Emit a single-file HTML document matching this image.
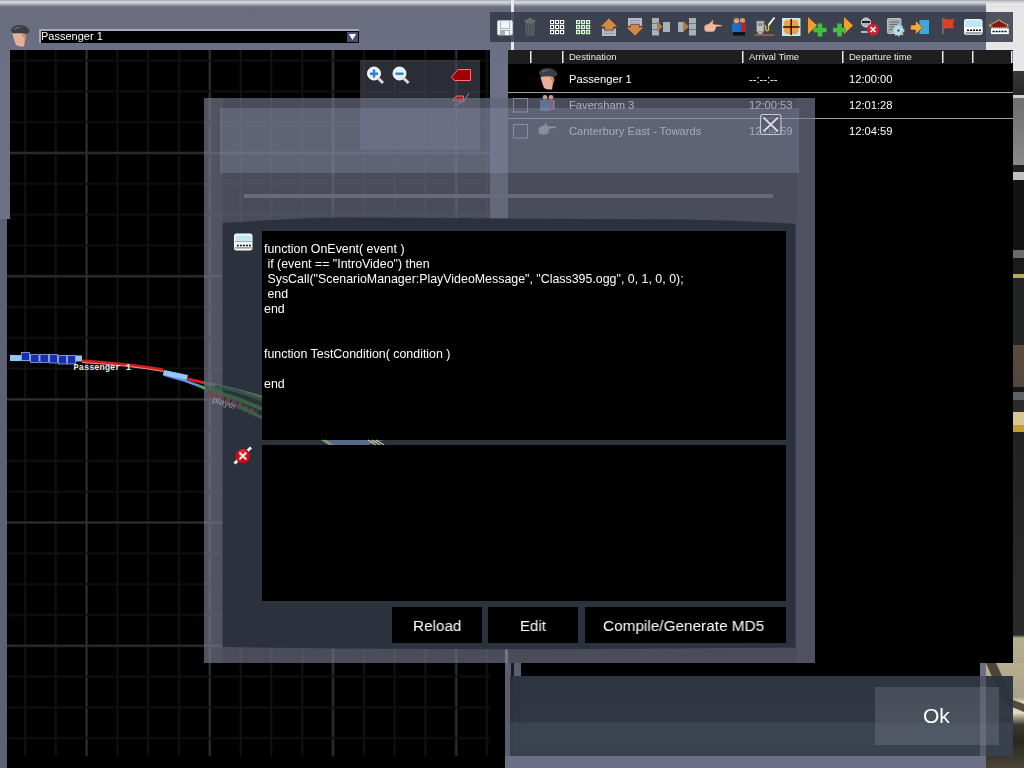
<!DOCTYPE html>
<html><head><meta charset="utf-8">
<style>
html,body{margin:0;padding:0;}
body{width:1024px;height:768px;overflow:hidden;position:relative;background:#6b6e81;font-family:"Liberation Sans",sans-serif;}
.a{position:absolute;}
.t{position:absolute;white-space:pre;color:#fff;line-height:1;will-change:transform;}
</style></head><body>
<!-- top strip -->
<div class="a" style="left:0;top:0;width:1024px;height:8px;background:linear-gradient(#8c8e98 0px,#d2d3d8 1px,#cfd0d6 3px,#7c7e8c 6px,#6a6c7e 8px);"></div>
<!-- main panel gradient -->
<div class="a" style="left:0;top:8px;width:986px;height:760px;background:linear-gradient(#6a6c7e,#6c7186 60px,#6b6f83);"></div>
<!-- right scene -->
<div class="a" style="left:986px;top:3px;width:38px;height:67px;background:#e6e6e8;"></div>
<div class="a" id="scene" style="left:1013px;top:60px;width:11px;height:708px;background:linear-gradient(#e6e6e8 0px,#e6e6e8 11px,#3a3a3a 11px,#262626 35px,#d0d0d0 35px,#d0d0d0 38px,#6e6e6e 38px,#8a8a8a 105px,#202020 105px,#202020 112px,#c0c0c0 112px,#c0c0c0 120px,#121212 120px,#121212 190px,#6a6a6a 190px,#6a6a6a 198px,#1a1a1a 198px,#1a1a1a 214px,#b8a860 214px,#b8a860 218px,#222428 218px,#222428 285px,#5a4a40 285px,#54463c 327px,#151515 327px,#151515 332px,#606060 332px,#606060 340px,#2a2a2a 340px,#2a2a2a 352px,#d8c890 352px,#d8c890 365px,#c0a030 365px,#c0a030 372px,#222 372px,#2a2a2a 575px,#b8ae90 578px,#b0a688 603px,#b8ae90 603px);"></div>
<div class="a" style="left:986px;top:663px;width:38px;height:105px;background:linear-gradient(#b8ae90,#aaa084 34px,#e4dcbc 40px,#e0d8b8 50px,#3a3630 62px,#2a2620 78px,#4a4438 105px);"></div>
<svg class="a" style="left:0;top:0;" width="1024" height="768"><path d="M986 663 L996 663 L1013 700 L1024 704 L1024 712 L1004 704 Z" fill="#3a3428" opacity="0.85"/></svg>
<div class="a" style="left:980px;top:663px;width:6px;height:105px;background:#6c7084;"></div>

<!-- left strip variation -->
<div class="a" style="left:0;top:219px;width:7px;height:549px;background:#5e6172;"></div>

<!-- map -->
<svg class="a" style="left:0;top:0;" width="1024" height="768">
<rect x="10" y="50" width="480" height="718" fill="#000"/>
<rect x="7" y="219" width="3" height="549" fill="#000"/>
<rect x="490" y="640" width="15" height="128" fill="#000"/>
<g id="grid">
<rect x="23.5" y="50" width="3" height="706" fill="#080808"/>
<rect x="54.3" y="50" width="3" height="706" fill="#080808"/>
<rect x="85.1" y="50" width="3" height="706" fill="#1c1c1c"/>
<rect x="115.9" y="50" width="3" height="706" fill="#080808"/>
<rect x="146.7" y="50" width="3" height="706" fill="#080808"/>
<rect x="177.5" y="50" width="3" height="706" fill="#080808"/>
<rect x="208.3" y="50" width="3" height="706" fill="#1c1c1c"/>
<rect x="239.1" y="50" width="3" height="706" fill="#080808"/>
<rect x="269.9" y="50" width="3" height="706" fill="#080808"/>
<rect x="300.7" y="50" width="3" height="706" fill="#080808"/>
<rect x="331.5" y="50" width="3" height="706" fill="#1c1c1c"/>
<rect x="362.3" y="50" width="3" height="706" fill="#080808"/>
<rect x="393.1" y="50" width="3" height="706" fill="#080808"/>
<rect x="423.9" y="50" width="3" height="706" fill="#080808"/>
<rect x="454.7" y="50" width="3" height="706" fill="#1c1c1c"/>
<rect x="485.5" y="50" width="3" height="706" fill="#080808"/>
<rect x="10" y="59.1" width="480" height="3" fill="#080808"/>
<rect x="10" y="89.9" width="480" height="3" fill="#080808"/>
<rect x="10" y="120.7" width="480" height="3" fill="#080808"/>
<rect x="10" y="151.5" width="480" height="3" fill="#1c1c1c"/>
<rect x="10" y="182.3" width="480" height="3" fill="#080808"/>
<rect x="10" y="213.1" width="480" height="3" fill="#080808"/>
<rect x="7" y="243.9" width="483" height="3" fill="#080808"/>
<rect x="7" y="274.7" width="483" height="3" fill="#1c1c1c"/>
<rect x="7" y="305.5" width="483" height="3" fill="#080808"/>
<rect x="7" y="336.3" width="483" height="3" fill="#080808"/>
<rect x="7" y="367.1" width="483" height="3" fill="#080808"/>
<rect x="7" y="397.9" width="483" height="3" fill="#1c1c1c"/>
<rect x="7" y="428.7" width="483" height="3" fill="#080808"/>
<rect x="7" y="459.5" width="483" height="3" fill="#080808"/>
<rect x="7" y="490.3" width="483" height="3" fill="#080808"/>
<rect x="7" y="521.1" width="483" height="3" fill="#1c1c1c"/>
<rect x="7" y="551.9" width="483" height="3" fill="#080808"/>
<rect x="7" y="582.7" width="483" height="3" fill="#080808"/>
<rect x="7" y="613.5" width="483" height="3" fill="#080808"/>
<rect x="7" y="644.3" width="483" height="3" fill="#1c1c1c"/>
<rect x="7" y="675.1" width="483" height="3" fill="#080808"/>
<rect x="7" y="705.9" width="483" height="3" fill="#080808"/>
<rect x="7" y="736.7" width="483" height="3" fill="#080808"/>
<rect x="24.5" y="50" width="1" height="706" fill="#171717"/>
<rect x="55.3" y="50" width="1" height="706" fill="#171717"/>
<rect x="86.1" y="50" width="1" height="706" fill="#363636"/>
<rect x="116.9" y="50" width="1" height="706" fill="#171717"/>
<rect x="147.7" y="50" width="1" height="706" fill="#171717"/>
<rect x="178.5" y="50" width="1" height="706" fill="#171717"/>
<rect x="209.3" y="50" width="1" height="706" fill="#363636"/>
<rect x="240.1" y="50" width="1" height="706" fill="#171717"/>
<rect x="270.9" y="50" width="1" height="706" fill="#171717"/>
<rect x="301.7" y="50" width="1" height="706" fill="#171717"/>
<rect x="332.5" y="50" width="1" height="706" fill="#363636"/>
<rect x="363.3" y="50" width="1" height="706" fill="#171717"/>
<rect x="394.1" y="50" width="1" height="706" fill="#171717"/>
<rect x="424.9" y="50" width="1" height="706" fill="#171717"/>
<rect x="455.7" y="50" width="1" height="706" fill="#363636"/>
<rect x="486.5" y="50" width="1" height="706" fill="#171717"/>
<rect x="10" y="60.1" width="480" height="1" fill="#121212"/>
<rect x="10" y="90.9" width="480" height="1" fill="#121212"/>
<rect x="10" y="121.7" width="480" height="1" fill="#121212"/>
<rect x="10" y="152.5" width="480" height="1" fill="#363636"/>
<rect x="10" y="183.3" width="480" height="1" fill="#121212"/>
<rect x="10" y="214.1" width="480" height="1" fill="#121212"/>
<rect x="7" y="244.9" width="483" height="1" fill="#121212"/>
<rect x="7" y="275.7" width="483" height="1" fill="#363636"/>
<rect x="7" y="306.5" width="483" height="1" fill="#121212"/>
<rect x="7" y="337.3" width="483" height="1" fill="#121212"/>
<rect x="7" y="368.1" width="483" height="1" fill="#121212"/>
<rect x="7" y="398.9" width="483" height="1" fill="#363636"/>
<rect x="7" y="429.7" width="483" height="1" fill="#121212"/>
<rect x="7" y="460.5" width="483" height="1" fill="#121212"/>
<rect x="7" y="491.3" width="483" height="1" fill="#121212"/>
<rect x="7" y="522.1" width="483" height="1" fill="#363636"/>
<rect x="7" y="552.9" width="483" height="1" fill="#121212"/>
<rect x="7" y="583.7" width="483" height="1" fill="#121212"/>
<rect x="7" y="614.5" width="483" height="1" fill="#121212"/>
<rect x="7" y="645.3" width="483" height="1" fill="#363636"/>
<rect x="7" y="676.1" width="483" height="1" fill="#121212"/>
<rect x="7" y="706.9" width="483" height="1" fill="#121212"/>
<rect x="7" y="737.7" width="483" height="1" fill="#121212"/>
</g>
<!-- track -->
<path d="M10 358 L82 358.5" stroke="#90c8f0" stroke-width="6"/>
<g fill="#1a2ea8" stroke="#8aa8f0" stroke-width="0.8">
<rect x="21.5" y="352.5" width="8" height="8"/>
<rect x="30.5" y="354.5" width="8.5" height="8"/>
<rect x="40" y="354.5" width="8.5" height="8"/>
<rect x="49.5" y="354.5" width="8" height="8.5"/>
<rect x="58.5" y="355.5" width="8" height="8.5"/>
<rect x="67.5" y="355.5" width="8" height="8.5"/>
</g>
<path d="M82 361 Q130 364 163.5 370" stroke="#d81c1c" stroke-width="3" fill="none"/>
<path d="M82 362.5 Q130 365.5 163.5 371.5" stroke="#f09090" stroke-width="1" fill="none"/>
<path d="M163.5 374.5 Q185 380 205 388" stroke="#6a90f0" stroke-width="2.5" fill="none"/>
<path d="M163.5 372.5 L187.5 377.5" stroke="#90c8f8" stroke-width="5" fill="none"/>
<path d="M187.5 379 L205 383" stroke="#d02020" stroke-width="3" fill="none"/>
<path d="M198 385.5 L205 389" stroke="#40b040" stroke-width="2" fill="none"/>
<text x="73.5" y="370" font-family="Liberation Mono" font-size="8.7" font-weight="bold" fill="#e8e8e8">Passenger 1</text>
</svg>

<!-- passenger head icon (top-left) -->
<svg class="a" style="left:0;top:0;" width="60" height="60"><g transform="translate(11 25)">
<path d="M1.5 8.5 Q2.5 14 5 20 Q8 22 13 21.5 L14.5 12 Q15.5 9 13 8 Z" fill="#e6ae9c"/>
<path d="M11.5 8.5 Q15 9 15.5 12 L14 16 Q13 12 11.5 11 Z" fill="#c89050"/>
<path d="M0 4.5 Q1 0.5 8 0 Q17 0.5 18.5 6 Q18 9 14 8.8 Q8 7.8 3 8.2 Q0 7.5 0 4.5 Z" fill="#3c3e44"/>
<path d="M2 3.5 Q6 1.2 12 2 Q8 2.8 4 4.5 Z" fill="#60646a"/>
</g></svg>

<!-- dropdown -->
<div class="a" style="left:39px;top:29px;width:320px;height:2px;background:#a8aab4;"></div>
<div class="a" style="left:39px;top:29px;width:2px;height:14px;background:#a8aab4;"></div>
<div class="a" style="left:41px;top:31px;width:318px;height:12px;background:#000;"></div>
<div class="a" style="left:347px;top:32px;width:11px;height:10px;background:#4c4c7c;"></div>
<svg class="a" style="left:348px;top:33px;" width="9" height="8"><path d="M1 1 L8 1 L4.5 7 Z" fill="#fff"/></svg>
<div class="t" style="left:41px;top:31px;font-size:11px;">Passenger 1</div>

<!-- zoom panel -->
<div class="a" style="left:360px;top:60px;width:120px;height:90px;background:rgba(72,78,92,0.58);"></div>
<svg class="a" style="left:364px;top:64px;" width="110" height="45">
<circle cx="10" cy="9.5" r="6.5" fill="#e8f0f8" stroke="#fff" stroke-width="1"/>
<rect x="6" y="8.5" width="8" height="2.5" fill="#3080d0"/><rect x="8.75" y="5.5" width="2.5" height="8" fill="#3080d0"/>
<path d="M14 14 L19 19" stroke="#d8d8d8" stroke-width="3"/>
<circle cx="35.5" cy="9.5" r="6.5" fill="#e8f0f8" stroke="#fff" stroke-width="1"/>
<rect x="31.5" y="8.5" width="8" height="2.5" fill="#3080d0"/>
<path d="M39.5 14 L44.5 19" stroke="#d8d8d8" stroke-width="3"/>
<path d="M94 5.5 L106.5 5.5 L106.5 16.5 L90.5 16.5 L87.5 13 Z" fill="#a00000" stroke="#ff7070" stroke-width="1"/>
<path d="M93 32 L99.5 32 L99.5 37 L89.5 37 L89.5 34.5 Z" fill="#b01010" stroke="#ff8080" stroke-width="0.8"/>
<path d="M100 37 L105 29 M100 37 L90 42" stroke="#b0b0c0" stroke-width="0.8"/>
</svg>

<!-- vertical white bar -->
<div class="a" style="left:511px;top:0;width:3px;height:50px;background:#e8e8f0;"></div>

<!-- toolbar -->
<div class="a" id="toolbar" style="left:490px;top:12px;width:523px;height:30px;background:rgba(50,57,70,0.85);"></div>

<svg class="a" style="left:0;top:0;" width="1024" height="50">
<!-- save -->
<rect x="497.5" y="20.5" width="15" height="14.5" rx="1.5" fill="#eef4fa" stroke="#b8c4d0" stroke-width="1"/>
<rect x="500.5" y="20.5" width="9" height="8" fill="#f4f4f4" stroke="#a0a8b0" stroke-width="0.8"/>
<rect x="500" y="30" width="10" height="5" fill="#a8acb0"/>
<rect x="505" y="31" width="4" height="4" fill="#fff"/>
<!-- trash -->
<path d="M525 22 L535 22 L534 35.5 L526 35.5 Z" fill="#5c5e62"/>
<ellipse cx="530" cy="21" rx="5.5" ry="2" fill="#6a6c70"/>
<rect x="528.5" y="18" width="3" height="2" fill="#777"/>
<path d="M527.5 24 V34 M530 24 V34 M532.5 24 V34" stroke="#464850" stroke-width="0.8"/>
<!-- grid white -->
<g fill="#fff">
<rect x="550" y="20" width="4.2" height="4.2"/><rect x="555" y="20" width="4.2" height="4.2"/><rect x="560" y="20" width="4.2" height="4.2"/>
<rect x="550" y="25" width="4.2" height="4.2"/><rect x="555" y="25" width="4.2" height="4.2"/><rect x="560" y="25" width="4.2" height="4.2"/>
<rect x="550" y="30" width="4.2" height="4.2"/><rect x="555" y="30" width="4.2" height="4.2"/><rect x="560" y="30" width="4.2" height="4.2"/>
</g>
<g fill="#000">
<rect x="551.2" y="21.2" width="1.8" height="1.8"/><rect x="556.2" y="21.2" width="1.8" height="1.8"/><rect x="561.2" y="21.2" width="1.8" height="1.8"/>
<rect x="551.2" y="26.2" width="1.8" height="1.8"/><rect x="556.2" y="26.2" width="1.8" height="1.8"/><rect x="561.2" y="26.2" width="1.8" height="1.8"/>
<rect x="551.2" y="31.2" width="1.8" height="1.8"/><rect x="556.2" y="31.2" width="1.8" height="1.8"/><rect x="561.2" y="31.2" width="1.8" height="1.8"/>
</g>
<!-- grid green -->
<g fill="#e8fae8">
<rect x="576" y="20" width="4.2" height="4.2"/><rect x="581" y="20" width="4.2" height="4.2"/><rect x="586" y="20" width="4.2" height="4.2"/>
<rect x="576" y="25" width="4.2" height="4.2"/><rect x="581" y="25" width="4.2" height="4.2"/><rect x="586" y="25" width="4.2" height="4.2"/>
<rect x="576" y="30" width="4.2" height="4.2"/><rect x="581" y="30" width="4.2" height="4.2"/><rect x="586" y="30" width="4.2" height="4.2"/>
</g>
<g fill="#30903a">
<rect x="577.1" y="21.1" width="2" height="2"/><rect x="582.1" y="21.1" width="2" height="2"/><rect x="587.1" y="21.1" width="2" height="2"/>
<rect x="577.1" y="26.1" width="2" height="2"/><rect x="582.1" y="26.1" width="2" height="2"/><rect x="587.1" y="26.1" width="2" height="2"/>
<rect x="577.1" y="31.1" width="2" height="2"/><rect x="582.1" y="31.1" width="2" height="2"/><rect x="587.1" y="31.1" width="2" height="2"/>
</g>
<!-- arrow up -->
<rect x="602" y="28.5" width="14" height="7.5" fill="#b4bcc8"/>
<path d="M604 31 H614 M604 33.5 H614" stroke="#8a929c" stroke-width="0.8"/>
<path d="M609 18 L618 27 L613.5 27 L613.5 30 L604.5 30 L604.5 27 L600 27 Z" fill="#d08a48" stroke="#4a3020" stroke-width="0.6"/>
<!-- arrow down -->
<rect x="628" y="18" width="14" height="8" fill="#b4bcc8"/>
<path d="M630 20.5 H640 M630 23 H640" stroke="#8a929c" stroke-width="0.8"/>
<path d="M635 36 L644 27 L639.5 27 L639.5 24.5 L630.5 24.5 L630.5 27 L626 27 Z" fill="#d08a48" stroke="#4a3020" stroke-width="0.6"/>
<!-- split1 -->
<rect x="652" y="18" width="7" height="5.5" fill="#a8b0b8"/><rect x="652" y="24" width="7" height="5.5" fill="#a8b0b8"/><rect x="652" y="30" width="7" height="5.5" fill="#a8b0b8"/>
<rect x="663" y="22" width="7" height="10" fill="#a8b0b8"/>
<path d="M657 21 L662.5 26.5 L657 32 Z" fill="#b87840"/>
<!-- split2 -->
<rect x="678" y="22" width="5.5" height="10" fill="#a8b0b8"/>
<rect x="689" y="18" width="7" height="5.5" fill="#a8b0b8"/><rect x="689" y="24" width="7" height="5.5" fill="#a8b0b8"/><rect x="689" y="30" width="7" height="5.5" fill="#a8b0b8"/>
<path d="M683 21 L689 26.5 L683 32 Z" fill="#b87840"/>
<!-- hand -->
<path d="M704 28 Q704 24 708 24 L711 22 Q712 19 713.5 20 L713 24 L722 25 L722 26.5 L716 27 Q716 32 712 32 L707 32 Q704 32 704 28 Z" fill="#f0b8a0" stroke="#2a2a2a" stroke-width="0.4"/>
<!-- people -->
<circle cx="742.5" cy="20.5" r="2.6" fill="#d89a80"/>
<rect x="739.5" y="22.5" width="6.5" height="10" rx="1" fill="#c02020"/>
<rect x="740" y="32" width="5" height="3.5" fill="#101010"/>
<circle cx="736.5" cy="20.5" r="2.8" fill="#e0a888"/>
<path d="M736.5 18 Q734 18 734 20 Q736 19 739 20 Q739 18 736.5 18 Z" fill="#b08040"/>
<rect x="732" y="23" width="9" height="9.5" rx="1.5" fill="#2070c0"/>
<rect x="733" y="32" width="7" height="3.5" fill="#101010"/>
<!-- pump -->
<rect x="756.5" y="21" width="7.5" height="11" fill="#c0c0c0" stroke="#707070" stroke-width="0.8"/>
<rect x="758" y="23" width="4.5" height="3" fill="#8a8a8a"/>
<rect x="758" y="32" width="4.5" height="2.5" fill="#b0b0b0"/>
<rect x="754.5" y="34" width="20" height="2" fill="#8a6238"/>
<path d="M764.5 25 Q766 26 766 30 Q767 32 768.5 30 L768.5 26 L772 21" stroke="#e0d040" stroke-width="1.2" fill="none"/>
<path d="M768.5 25 L774.5 17.5" stroke="#f0f0f0" stroke-width="2"/>
<!-- cross arrows -->
<rect x="782" y="18" width="18.5" height="18" fill="#c8e8f0"/>
<path d="M786 20 L796.5 20 L798.5 22.5 L798.5 31.5 L796.5 34 L786 34 L783.8 31.5 L783.8 22.5 Z" fill="#f0a040"/>
<path d="M783 27 H799.5 M791.2 19 V35" stroke="#2a0c04" stroke-width="1.5"/>
<!-- play+ -->
<path d="M808 17 L817 25.5 L808 34 Z" fill="#f0a030"/>
<path d="M813.5 30 H826.5 M820 23.5 V36.5" stroke="#40c040" stroke-width="4.6"/>
<!-- plus arrow -->
<path d="M844 17 L853 25.5 L844 34 Z" fill="#f0a030"/>
<path d="M833 30 H846 M839.5 23.5 V36.5" stroke="#40c040" stroke-width="4.6"/>
<!-- person x -->
<circle cx="866" cy="22.5" r="4.5" fill="#b0b4b8" stroke="#e0e0e0" stroke-width="1"/>
<rect x="862" y="21" width="8" height="2" fill="#202020"/>
<path d="M861 32 H868" stroke="#e0e0e0" stroke-width="1.5"/>
<circle cx="873" cy="29.5" r="6" fill="#d02030"/>
<path d="M870.5 27 L875.5 32 M875.5 27 L870.5 32" stroke="#fff" stroke-width="1.6"/>
<!-- doc gear -->
<rect x="887.5" y="18.5" width="13.5" height="15" rx="1" fill="#a8acb0" stroke="#d0d0d0" stroke-width="0.8"/>
<path d="M889.5 22 H899 M889.5 24.5 H897 M889.5 27 H896 M889.5 29.5 H895" stroke="#606468" stroke-width="0.9"/>
<circle cx="898.5" cy="30.5" r="5" fill="#b8e0f0" stroke="#a0d0e8" stroke-width="2" stroke-dasharray="1.6 1.6"/>
<circle cx="898.5" cy="30.5" r="1.2" fill="#405060"/>
<path d="M901 33 L904 35 L902 31 Z" fill="#f0a040"/>
<!-- arrow box -->
<rect x="919.5" y="20" width="9.5" height="14" fill="#40a8d8"/>
<path d="M910.5 25 L915.5 25 L915.5 20.5 L922.5 27.5 L915.5 34.5 L915.5 30 L910.5 30 Z" fill="#f4a838" stroke="#3a2a10" stroke-width="0.5"/>
<!-- flag -->
<rect x="942" y="18" width="1.6" height="16" fill="#707070"/>
<path d="M943.5 18.5 L949 19.5 L954 19 L953 24.5 L954 28.5 L948 28 L943.5 29 Z" fill="#e04020"/>
<!-- table icon -->
<rect x="964.5" y="19.5" width="17.5" height="15" rx="1.5" fill="#d8eef4" stroke="#f0f4f8" stroke-width="1"/>
<rect x="965.5" y="20.5" width="15.5" height="6.5" fill="#bfe6f2"/>
<rect x="965" y="27" width="17.5" height="5" fill="#fff"/>
<path d="M967 30.2 H981" stroke="#000" stroke-width="1.6" stroke-dasharray="2 1"/>
<rect x="965.5" y="32" width="16" height="2.5" fill="#a0aaa8"/>
<!-- house -->
<path d="M989.5 25.5 L999 20 L1008.5 25.5 L1005 27.8 L993 27.8 Z" fill="#801a1a" stroke="#e8d060" stroke-width="1.1" stroke-dasharray="1.3 0.7"/>
<rect x="991" y="28.3" width="17.8" height="5.8" fill="#fff"/>
<path d="M992.5 31.5 H1007.5" stroke="#000" stroke-width="1.6" stroke-dasharray="2 1"/>
</svg>

<!-- table -->
<div class="a" style="left:508px;top:50px;width:505px;height:14px;background:#1e1e1e;"></div>
<div class="a" style="left:508px;top:64px;width:505px;height:599px;background:#000;"></div>
<div class="a" style="left:520px;top:663px;width:460px;height:13px;background:#000;"></div>
<div class="a" style="left:508px;top:92px;width:505px;height:1px;background:#a0a0a0;"></div>
<div class="a" style="left:508px;top:118px;width:505px;height:1px;background:#a0a0a0;"></div>
<svg class="a" style="left:0;top:0;" width="1024" height="150">
<g fill="#e8e8e8">
<rect x="530" y="51" width="1.5" height="12"/><rect x="562" y="51" width="1.5" height="12"/>
<rect x="742" y="51" width="1.5" height="12"/><rect x="842" y="51" width="1.5" height="12"/>
<rect x="942" y="51" width="1.5" height="12"/><rect x="972" y="51" width="1.5" height="12"/>
<rect x="1011" y="51" width="1.5" height="12"/>
</g>
<!-- row1 passenger icon -->
<g transform="translate(539 68)">
<path d="M1.5 8.5 Q2.5 14 5 20 Q8 22 13 21.5 L14.5 12 Q15.5 9 13 8 Z" fill="#e6ae9c"/>
<path d="M11.5 8.5 Q15 9 15.5 12 L14 16 Q13 12 11.5 11 Z" fill="#c89050"/>
<path d="M0 4.5 Q1 0.5 8 0 Q17 0.5 18.5 6 Q18 9 14 8.8 Q8 7.8 3 8.2 Q0 7.5 0 4.5 Z" fill="#3c3e44"/>
<path d="M2 3.5 Q6 1.2 12 2 Q8 2.8 4 4.5 Z" fill="#60646a"/>
</g>
<!-- row2 people -->
<circle cx="551" cy="97.5" r="2.4" fill="#c8a090"/><circle cx="545" cy="97.5" r="2.4" fill="#c8a090"/>
<rect x="548.5" y="100" width="5.5" height="10" fill="#8a4858"/>
<rect x="553.5" y="100" width="1" height="9" fill="#b8b8c8"/>
<rect x="540" y="100" width="9" height="11" rx="1" fill="#3e6a9c"/>
<!-- row3 hand -->
<path d="M538.5 130 Q538.5 127 541.5 126.5 L545 124.5 Q546 122.5 547 123.3 L546.5 126 L556 126.5 L556 128 L549 128.8 Q549 134.5 546 134.5 L541.5 134.5 Q538.5 134.5 538.5 130 Z" fill="#9c96a4"/>
<!-- checkboxes -->
<rect x="513.5" y="98.5" width="14" height="13.5" fill="none" stroke="#9a9ca8" stroke-width="1"/>
<rect x="513.5" y="124.5" width="14" height="13.5" fill="none" stroke="#9a9ca8" stroke-width="1"/>
</svg>
<div class="t" style="left:569px;top:52px;font-size:9.5px;color:#e8e8e8;">Destination</div>
<div class="t" style="left:749px;top:52px;font-size:9.5px;color:#e8e8e8;">Arrival Time</div>
<div class="t" style="left:849px;top:52px;font-size:9.5px;color:#e8e8e8;">Departure time</div>

<div class="t" style="left:569px;top:74px;font-size:11.2px;">Passenger 1</div>
<div class="t" style="left:749px;top:74px;font-size:11.2px;">--:--:--</div>
<div class="t" style="left:849px;top:74px;font-size:11.2px;">12:00:00</div>
<div class="t" style="left:569px;top:100px;font-size:11.2px;">Faversham 3</div>
<div class="t" style="left:749px;top:100px;font-size:11.2px;">12:00:53</div>
<div class="t" style="left:849px;top:100px;font-size:11.2px;">12:01:28</div>
<div class="t" style="left:569px;top:126px;font-size:11.2px;">Canterbury East - Towards</div>
<div class="t" style="left:749px;top:126px;font-size:11.2px;">12:04:59</div>
<div class="t" style="left:849px;top:126px;font-size:11.2px;">12:04:59</div>

<!-- bottom panel -->
<div class="a" style="left:505px;top:663px;width:6px;height:105px;background:#5a5e6e;"></div>
<div class="a" style="left:511px;top:663px;width:3px;height:105px;background:#1a1c24;"></div>
<div class="a" style="left:514px;top:663px;width:7px;height:105px;background:#5a5e6e;"></div>
<div class="a" style="left:505px;top:756px;width:475px;height:12px;background:#6b6f87;"></div>
<div class="a" style="left:510px;top:676px;width:503px;height:80px;background:linear-gradient(#2b323d,#2e3540 45px,#39424e 48px,#37404c);opacity:0.96;"></div>
<div class="a" style="left:875px;top:687px;width:124px;height:58px;background:linear-gradient(#474e5a,#4a515d 35px,#525966 38px,#505764);"></div>
<div class="a" style="left:980px;top:676px;width:6px;height:80px;background:rgba(140,146,160,0.35);"></div>
<div class="t" style="left:922.5px;top:705px;font-size:21px;">Ok</div>

<div class="a" style="left:490px;top:98px;width:18px;height:542px;background:#484c5a;"></div>
<!-- dialog -->
<div class="a" id="dlg" style="left:204px;top:98px;width:611px;height:565px;background:rgba(117,120,143,0.63);"></div>
<div class="a" style="left:204px;top:98px;width:19px;height:565px;background:rgba(150,154,180,0.09);"></div>
<div class="a" style="left:797px;top:98px;width:18px;height:565px;background:rgba(150,154,180,0.07);"></div>
<div class="a" style="left:220px;top:108px;width:579px;height:65px;background:rgba(153,162,195,0.27);"></div>
<div class="a" style="left:244px;top:193.5px;width:529px;height:4px;background:#686b7c;"></div>
<svg class="a" style="left:0;top:0;" width="1024" height="768">
<path d="M222.5 223 Q300 218 340 217.5 L680 219.5 Q760 221 795.5 224 L795.5 647.5 Q500 651 222.5 647 Z" fill="#2b323d"/>
</svg>
<svg class="a" style="left:0;top:0;opacity:0.8;" width="1024" height="768">
<!-- under dialog -->
<path d="M205 383 Q235 389 262 397" stroke="#6a7080" stroke-width="3" fill="none"/>
<path d="M215 386 Q240 391 262 400" stroke="#2e6040" stroke-width="3" fill="none"/>
<path d="M205 389 Q235 397 262 409" stroke="#3a7044" stroke-width="4" fill="none"/>
<path d="M207 393 Q232 402 256 414" stroke="#7a4050" stroke-width="6" stroke-dasharray="5 1.5" fill="none"/>
<path d="M238 406 Q250 411 262 418" stroke="#3a7044" stroke-width="3" fill="none"/>
<text x="212" y="402" font-family="Liberation Sans" font-size="9" fill="#b0b0c0" transform="rotate(18 212 402)">player</text>
</svg>
<div class="a" style="left:262px;top:231px;width:524px;height:209px;background:#000;"></div>
<svg class="a" style="left:0;top:0;" width="1024" height="768"><path d="M321 440 L330 445 L368 445 L384 440 Z" fill="#5a6a8a"/><path d="M322 440 L330 445 M325 440 L333 445" stroke="#8aa070" stroke-width="1.2"/><path d="M368 440 L376 445 M372 440 L380 445 M376 440 L384 445" stroke="#c0c890" stroke-width="1.2"/></svg>
<div class="a" style="left:262px;top:445px;width:524px;height:156px;background:#000;"></div>
<div class="a" style="left:392px;top:607px;width:90px;height:36px;background:#000;"></div>
<div class="a" style="left:488px;top:607px;width:90px;height:36px;background:#000;"></div>
<div class="a" style="left:585px;top:607px;width:200.5px;height:36px;background:#000;"></div>
<div class="t" style="left:413px;top:618px;font-size:15.5px;transform:scaleX(0.985);transform-origin:0 0;">Reload</div>
<div class="t" style="left:519.5px;top:618px;font-size:15.5px;transform:scaleX(0.97);transform-origin:0 0;">Edit</div>
<div class="t" style="left:603px;top:618px;font-size:15.5px;transform:scaleX(0.99);transform-origin:0 0;">Compile/Generate MD5</div>

<div class="t" style="left:264px;top:242px;font-size:12.4px;line-height:15px;">function OnEvent( event )
 if (event == "IntroVideo") then
 SysCall("ScenarioManager:PlayVideoMessage", "Class395.ogg", 0, 1, 0, 0);
 end
end


function TestCondition( condition )

end</div>

<svg class="a" style="left:0;top:0;" width="1024" height="768">
<rect x="234.5" y="234" width="17.5" height="16" rx="1.5" fill="#f0f4f4" stroke="#fff" stroke-width="1"/>
<rect x="235.5" y="235.5" width="16" height="5.5" fill="#bfe8f2"/>
<rect x="235" y="241" width="17" height="1" fill="#a0b0b0"/>
<path d="M237 245.5 H251" stroke="#000" stroke-width="1.6" stroke-dasharray="1.8 1.2"/>
<rect x="235" y="247" width="17" height="1.6" fill="#98a8a0"/>
<path d="M234.5 463.5 L251 447.5" stroke="#f0f0f0" stroke-width="3"/>
<circle cx="242.8" cy="456" r="7.3" fill="#c81010"/>
<circle cx="242.8" cy="453.5" r="4" fill="#e85050" opacity="0.5"/>
<path d="M239.3 452.5 L246.3 459.5 M246.3 452.5 L239.3 459.5" stroke="#fff0f0" stroke-width="1.8"/>
</svg>
<!-- close X -->
<svg class="a" style="left:0;top:0;" width="1024" height="200">
<rect x="760.5" y="114.5" width="20.5" height="20" rx="2.5" fill="rgba(70,74,90,0.25)" stroke="#c8cad4" stroke-width="1.1"/>
<path d="M763.5 117.5 L778 131.5 M778 117.5 L763.5 131.5" stroke="#3a3c48" stroke-width="3.4" opacity="0.5"/>
<path d="M763.5 117.5 L778 131.5 M778 117.5 L763.5 131.5" stroke="#d4d6de" stroke-width="2.2"/>
</svg>
</body></html>
